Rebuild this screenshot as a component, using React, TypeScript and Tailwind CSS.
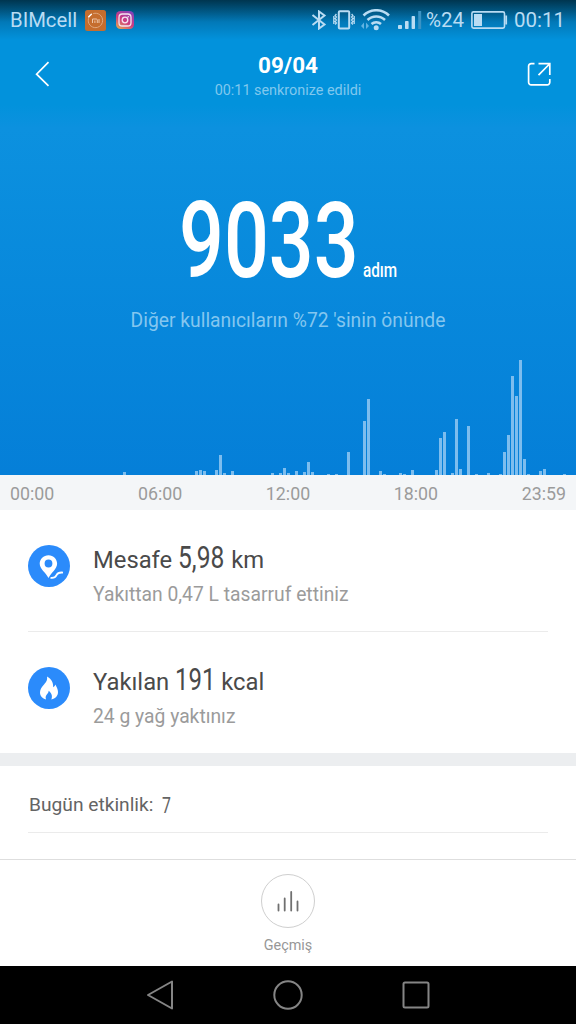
import type { ReactNode } from "react";

// step bars, keyed by ten-minute slot of the day
const STEPS: Record<number, number> = {
  31: 3, 49: 4, 50: 5, 51: 4, 54: 5, 55: 20, 56: 2, 58: 4, 68: 2, 70: 2, 71: 7, 72: 2, 74: 4, 76: 3, 77: 13, 78: 3,
  82: 1, 84: 1, 87: 23, 91: 54, 92: 76, 95: 4, 96: 1, 100: 2, 101: 1, 103: 5, 109: 5, 110: 37, 111: 43, 113: 2,
  114: 56, 115: 6, 117: 49, 119: 1, 122: 2, 125: 1, 126: 23, 127: 40, 128: 99, 129: 79, 130: 115, 131: 16, 132: 1,
  135: 4, 136: 6, 141: 1,
};

const HOURS = ["00:00", "06:00", "12:00", "18:00", "23:59"];

const StatusBar = () => {
  return (
    <div className="h-10 flex items-center justify-between px-[10px] text-[#b9dcf3] bg-linear-to-b from-[#00354f] via-[#0279b8] via-55% to-[#0292dc]">
      <div className="flex items-center">
        <span className="w-[75px] text-[20.3px] leading-10 whitespace-nowrap">BIMcell</span>
        <svg className="w-[21px] h-[21px]" viewBox="0 0 21 21" fill="none">
          <rect width="21" height="21" rx="2.5" fill="#c56d2e" />
          <path d="M5.2 5.5a7.2 7.2 0 1 0 3-1.9" stroke="#dfa77e" strokeWidth="1" />
          <path d="M3.7 6.8l2.7-2.6" stroke="#fff" strokeWidth="1.4" strokeLinecap="round" />
          <path d="M7.5 13V9h3.8q1 0 1 1v3M9.9 10.5V13M14 9v4" stroke="#edc5a8" strokeWidth="1" />
        </svg>
        <svg className="ml-[10px] w-[18px] h-[18px]" viewBox="0 0 18 18" fill="none">
          <defs>
            <linearGradient id="insta" x1="0.2" y1="1" x2="0.8" y2="0">
              <stop offset="0" stopColor="#e0a156" />
              <stop offset="0.45" stopColor="#ce3b80" />
              <stop offset="1" stopColor="#8243bd" />
            </linearGradient>
          </defs>
          <rect width="18" height="18" rx="4.5" fill="url(#insta)" />
          <rect x="3" y="3" width="12" height="12" rx="3.3" stroke="#f6e4f0" strokeWidth="1.3" />
          <circle cx="9" cy="9" r="2.8" stroke="#f6e4f0" strokeWidth="1.3" />
          <circle cx="12.3" cy="5.7" r="0.8" fill="#f6e4f0" />
        </svg>
      </div>
      <div className="flex items-center">
        <svg className="w-[16px] h-[20px]" viewBox="0 0 16 20" fill="none" stroke="currentColor" strokeWidth="2">
          <path d="M1.5 5l12 9.5L8 18.5V1.5l5.5 4-12 9.5" />
        </svg>
        <svg className="ml-[6px] w-[22px] h-[20px]" viewBox="0 0 22 20" fill="none" stroke="currentColor">
          <rect x="5.8" y="1.2" width="10.4" height="17.4" rx="1" strokeWidth="2" />
          <path d="M3.4 4l-1.3 1.5 1.3 1.5-1.3 1.5 1.3 1.5-1.3 1.5 1.3 1.5-1.3 1.5M.8 6v8M18.6 4l1.3 1.5-1.3 1.5 1.3 1.5-1.3 1.5 1.3 1.5-1.3 1.5 1.3 1.5M21.2 6v8" strokeWidth="1.3" />
        </svg>
        <svg className="ml-[6px] w-[29px] h-[22px]" viewBox="0 0 29 22" fill="none" stroke="currentColor" strokeWidth="2.5">
          <path d="M2.5 6.5a18 18 0 0 1 25.5 0M6.5 11a12.6 12.6 0 0 1 17.5 0M10.5 15a7 7 0 0 1 9.5 0" />
          <circle cx="15.2" cy="18.8" r="2.5" fill="currentColor" stroke="none" />
          <path d="M0 17l3-3.5V20zM8 17l-3-3.5V20z" fill="#62b3e2" stroke="none" />
        </svg>
        <svg className="ml-[8px] w-[24px] h-[20px]" viewBox="0 0 24 20" fill="currentColor">
          <rect x="0" y="15" width="4" height="4" rx="0.8" />
          <rect x="7" y="11" width="3.6" height="8" rx="0.8" />
          <rect x="13.6" y="6" width="3.4" height="13" rx="0.8" />
          <rect x="20.2" y="1" width="3" height="18" fill="#3b93c4" />
        </svg>
        <span className="ml-[4px] w-[40px] text-[20.5px] leading-10 whitespace-nowrap">%24</span>
        <svg className="ml-[5px] w-[37px] h-[18px]" viewBox="0 0 37 18" fill="none">
          <rect x="0.9" y="0.9" width="32.6" height="16.2" rx="1.6" stroke="currentColor" strokeWidth="1.6" />
          <rect x="3" y="3" width="8" height="12" fill="currentColor" />
          <path d="M35.2 4.5v9" stroke="currentColor" strokeWidth="1.8" />
        </svg>
        <span className="ml-[6px] w-[52px] text-[20.5px] leading-10 whitespace-nowrap">00:11</span>
      </div>
    </div>
  );
};

const Header = () => {
  return (
    <header className="h-[70px] grid grid-cols-[1fr_auto_1fr] px-[24px]">
      <svg className="mt-[20px] ml-[10px] w-[20px] h-[28px]" viewBox="0 0 20 28" fill="none" stroke="#fff" strokeWidth="1.7">
        <path d="M14.5 2.2L2.6 14.2l11.9 11.6" />
      </svg>
      <div className="pt-[11px] text-center">
        <h1 className="text-[22.5px] leading-[28px] font-bold text-white">09/04</h1>
        <p className="mt-[3px] text-[14.4px] leading-[18px] text-[#80c8ee]">00:11 senkronize edildi</p>
      </div>
      <svg className="mt-[22px] w-[25px] h-[25px] justify-self-end" viewBox="0 0 25 25" fill="none" stroke="#fff" strokeWidth="1.7">
        <path d="M7.5 1.6H4.2a2.6 2.6 0 0 0-2.6 2.6v16a2.6 2.6 0 0 0 2.6 2.6h16a2.6 2.6 0 0 0 2.6-2.6V17M11.5 1.6h11.3v11.5M22.5 2L11.5 13.2" />
      </svg>
    </header>
  );
};

const StepsChart = () => {
  return (
    <div className="h-[116px] flex items-end overflow-hidden pl-[3px]">
      {Array.from({ length: 143 }, (_, i) => (
        <div key={i} className="w-[3px] mr-px shrink-0 bg-[#7dbdee]" style={{ height: STEPS[i + 1] ?? 0 }} />
      ))}
    </div>
  );
};

type StatRowProps = {
  icon: ReactNode;
  label: string;
  value: ReactNode;
  unit: string;
  note: string;
};

const StatRow = ({ icon, label, value, unit, note }: StatRowProps) => {
  return (
    <div className="flex h-[121px] pt-[31px]">
      <div className="mt-[4px] w-[42px] h-[42px] rounded-full bg-[#2b8bfb] flex items-center justify-center">{icon}</div>
      <div className="ml-[23px]">
        <div className="flex items-baseline h-[38px] text-[23.8px] leading-[38px] text-[#4a4a4a] whitespace-nowrap">
          <span>{label}</span>
          {value}
          <span>{unit}</span>
        </div>
        <p className="mt-[3px] text-[19.3px] leading-[26px] text-[#9b9b9b]">{note}</p>
      </div>
    </div>
  );
};

const App = () => {
  return (
    <div className="w-[576px] h-[1024px] flex flex-col overflow-hidden bg-white font-[Roboto,'Liberation_Sans',sans-serif]">
      <section className="h-[475px] shrink-0 flex flex-col bg-linear-to-b from-[#0292dc] from-[22%] via-[#0c91df] via-[27%] to-[#057fd8]">
        <StatusBar />
        <Header />
        <div className="mt-[81px] h-[100px] flex items-baseline pl-[179px] text-white">
          <span className="w-[179px] text-[106px] leading-[100px] font-medium">
            <span className="inline-block origin-left scale-x-[0.745]">9033</span>
          </span>
          <span className="ml-[5px] text-[20px] font-medium">
            <span className="inline-block origin-left scale-x-[0.765]">adım</span>
          </span>
        </div>
        <p className="mt-[16px] text-center text-[19.3px] leading-[28px] text-[#84c6ef]">Diğer kullanıcıların %72 'sinin önünde</p>
        <div className="mt-auto">
          <StepsChart />
        </div>
      </section>

      <div className="h-[35px] shrink-0 flex justify-between items-center px-[10px] pt-[3px] bg-[#f4f6f8] text-[17.8px] text-[#9b9b9b]">
        {HOURS.map((hour) => (
          <span key={hour}>{hour}</span>
        ))}
      </div>

      <section className="px-[28px] shrink-0">
        <StatRow
          icon={
            <svg className="w-[42px] h-[42px]" viewBox="0 0 42 42" fill="none">
              <path fillRule="evenodd" d="M20.5 10.2c-5 0-8.8 3.8-8.8 8.4 0 5.6 5.8 8.8 8.8 14.4 3-5.6 8.6-8.8 8.6-14.4 0-4.6-3.6-8.4-8.6-8.4zm0 4.4a3.9 3.9 0 1 1 0 7.8 3.9 3.9 0 0 1 0-7.8z" fill="#fff" />
              <path d="M22.5 32.8c3.5.6 5-.5 6-2.6s3-3 6.5-2.6" stroke="#fff" strokeWidth="1.8" />
            </svg>
          }
          label="Mesafe"
          value={
            <span className="ml-[6px] w-[53px] text-[31.5px] leading-[30px]">
              <span className="inline-block origin-left scale-x-[0.78]">5,98</span>
            </span>
          }
          unit="km"
          note="Yakıttan 0,47 L tasarruf ettiniz"
        />
        <div className="h-px bg-[#ebebeb]" />
        <StatRow
          icon={
            <svg className="w-[42px] h-[42px]" viewBox="0 0 42 42" fill="#fff">
              <path d="M19 9.5c.8 4-1.6 6.4-3.4 8.5C13.5 20.6 12 22.5 12 25.5c0 3.6 2.6 6 6 7-1-3 .2-4.5 1.6-6 .8-.8 1-1.6 1-2.7 2.8 2 4.2 5 2.8 8.7 4-1 6.6-3.5 6.6-7.5 0-3-1.6-5.2-2.6-7.5-.6 1.5-1.2 2.3-2.2 2.8.3-4.5-1.8-8.6-6.2-10.8z" />
            </svg>
          }
          label="Yakılan"
          value={
            <span className="ml-[6px] w-[46px] text-[31.5px] leading-[30px]">
              <span className="inline-block origin-left scale-x-[0.76]">191</span>
            </span>
          }
          unit="kcal"
          note="24 g yağ yaktınız"
        />
      </section>

      <div className="h-[13px] shrink-0 bg-[#eceef0]" />

      <section className="px-[28px] h-[93px] shrink-0">
        <div className="h-[67px] pt-[12px] pl-px flex items-center border-b border-[#ebebeb] text-[19.2px] text-[#646464]">
          <span>Bugün etkinlik:</span>
          <span className="ml-[9px] inline-block origin-left scale-x-[0.72] text-[22px]">7</span>
        </div>
      </section>

      <section className="h-[107px] shrink-0 flex flex-col items-center border-t border-[#dedede]">
        <div className="mt-[14px] w-[54px] h-[54px] rounded-full border border-[#cfcfcf] flex items-center justify-center">
          <svg className="w-[24px] h-[24px]" viewBox="0 0 24 24" stroke="#707070" strokeWidth="1.8" strokeLinecap="round">
            <path d="M2.5 15.5v6M8.7 9.500v12M15.2 3v18.500M21.500 12.500v9" />
          </svg>
        </div>
        <span className="mt-[8px] text-[14.4px] leading-[20px] text-[#979797]">Geçmiş</span>
      </section>

      <nav className="h-[58px] shrink-0 flex items-center justify-between px-[146px] bg-black">
        <svg className="w-[28px] h-[30px]" viewBox="0 0 28 30" fill="none" stroke="#858585" strokeWidth="2" strokeLinejoin="round">
          <path d="M2 15L26 1.5v27z" />
        </svg>
        <svg className="w-[30px] h-[30px]" viewBox="0 0 30 30" fill="none" stroke="#858585" strokeWidth="2">
          <circle cx="15" cy="15" r="13.7" />
        </svg>
        <svg className="w-[28px] h-[28px]" viewBox="0 0 28 28" fill="none" stroke="#858585" strokeWidth="2">
          <rect x="1.5" y="1.5" width="25" height="25" rx="1.5" />
        </svg>
      </nav>
    </div>
  );
};

export default App;
